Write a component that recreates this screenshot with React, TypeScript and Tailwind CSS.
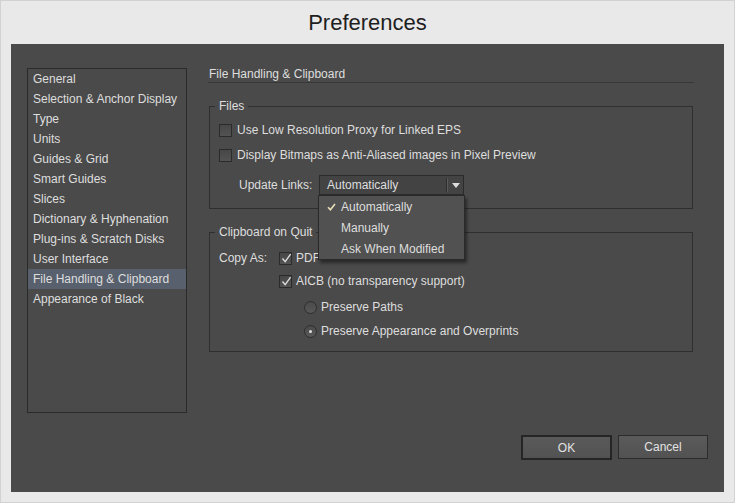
import React from "react"

const sidebarItems = [
  "General",
  "Selection & Anchor Display",
  "Type",
  "Units",
  "Guides & Grid",
  "Smart Guides",
  "Slices",
  "Dictionary & Hyphenation",
  "Plug-ins & Scratch Disks",
  "User Interface",
  "File Handling & Clipboard",
  "Appearance of Black",
]

function Checkbox({ checked }: { checked?: boolean }) {
  return (
    <span className="relative w-[13px] h-[13px] shrink-0 border border-[#2b2b2b] bg-gradient-to-b from-[#474747] to-[#535353] flex items-center justify-center">
      {checked && (
        <svg width="11" height="11" viewBox="0 0 11 11" className="absolute left-[1px] top-[0px]">
          <path d="M1.5 5.5 L4.2 8.6 L9.6 1.2" fill="none" stroke="#dcdcdc" strokeWidth="1.4" />
        </svg>
      )}
    </span>
  )
}

function Radio({ checked }: { checked?: boolean }) {
  return (
    <span className="w-[13px] h-[13px] shrink-0 rounded-full border border-[#2e2e2e] bg-gradient-to-b from-[#4a4a4a] to-[#585858] flex items-center justify-center">
      {checked && <span className="w-[3px] h-[3px] rounded-full bg-[#e2e2e2]" />}
    </span>
  )
}

export default function App() {
  return (
    <div className="w-[735px] h-[503px] bg-[#e9e9e9] border border-[#d2d2d2] flex flex-col font-['Liberation_Sans',Arial,sans-serif] text-[12px] text-[#dedede]">
      <div className="h-[43px] flex items-center justify-center text-[22px] text-[#1e1e1e] pb-[1px]">
        Preferences
      </div>

      <div className="ml-[10px] w-[713px] h-[448px] bg-[#4a4a4a] flex flex-col pt-[24px] px-[16px]">
        <div className="flex">
          {/* category list */}
          <div className="w-[160px] h-[345px] border border-[#2a2a2a] flex flex-col">
            {sidebarItems.map((item) => (
              <div
                key={item}
                className={`h-[20px] leading-[20px] pl-[5px] whitespace-nowrap ${
                  item === "File Handling & Clipboard" ? "bg-[#58606d]" : ""
                }`}
              >
                {item}
              </div>
            ))}
          </div>

          {/* settings */}
          <div className="ml-[21px] w-[486px] flex flex-col">
            <div className="h-[15px] leading-[13px] pl-[1px] border-b border-[#383838]">
              File Handling &amp; Clipboard
            </div>

            <fieldset className="mt-[15px] ml-[1px] w-[484px] border border-[#2f2f2f] pb-[13px]">
              <legend className="ml-[5px] px-[4px] leading-[16px]">Files</legend>
              <div className="pl-[9px] flex flex-col">
                <label className="mt-[6px] h-[20px] flex items-center gap-[5px]">
                  <Checkbox />
                  <span>Use Low Resolution Proxy for Linked EPS</span>
                </label>
                <label className="mt-[5px] h-[20px] flex items-center gap-[5px]">
                  <Checkbox />
                  <span>Display Bitmaps as Anti-Aliased images in Pixel Preview</span>
                </label>
                <div className="mt-[10px] h-[20px] flex items-center">
                  <span className="ml-[20px] w-[80px]">Update Links:</span>
                  <div className="relative">
                    <div className="w-[145px] h-[20px] border border-[#2b2b2b] bg-[#434343] flex items-center">
                      <span className="flex-1 pl-[7px] leading-[18px]">Automatically</span>
                      <span className="w-[1px] h-[14px] bg-[#2e2e2e]" />
                      <span className="w-[1px] h-[14px] bg-[#5a5a5a]" />
                      <span className="w-[15px] flex items-center justify-center">
                        <svg width="8" height="5" viewBox="0 0 8 5">
                          <path d="M0 0 H8 L4 5 Z" fill="#dcdcdc" />
                        </svg>
                      </span>
                    </div>

                    {/* open dropdown */}
                    <div className="absolute z-10 left-[-1px] top-[20px] w-[147px] border border-[#2a2a2a] bg-[#515151] shadow-[2px_3px_3px_rgba(0,0,0,0.45)] flex flex-col">
                      <div className="h-[21px] flex items-center">
                        <span className="w-[22px] flex justify-center pl-[2px]">
                          <svg width="9" height="8" viewBox="0 0 9 8">
                            <path d="M1 4.2 L3.4 6.8 L8 1" fill="none" stroke="#e8dfb8" strokeWidth="1.6" />
                          </svg>
                        </span>
                        <span>Automatically</span>
                      </div>
                      <div className="h-[21px] flex items-center pl-[22px]">Manually</div>
                      <div className="h-[21px] flex items-center pl-[22px]">Ask When Modified</div>
                    </div>
                  </div>
                </div>
              </div>
            </fieldset>

            <fieldset className="mt-[15px] ml-[1px] w-[484px] border border-[#2f2f2f] pb-[10px]">
              <legend className="ml-[5px] px-[4px] leading-[16px]">Clipboard on Quit</legend>
              <div className="pl-[9px] flex flex-col">
                <div className="mt-[8px] h-[20px] flex items-center">
                  <span className="w-[60px]">Copy As:</span>
                  <label className="flex items-center gap-[4px]">
                    <Checkbox checked />
                    <span>PDF</span>
                  </label>
                </div>
                <label className="mt-[3px] h-[20px] flex items-center gap-[4px] ml-[60px]">
                  <Checkbox checked />
                  <span>AICB (no transparency support)</span>
                </label>
                <label className="mt-[6px] h-[20px] flex items-center gap-[4px] ml-[85px]">
                  <Radio />
                  <span>Preserve Paths</span>
                </label>
                <label className="mt-[4px] h-[20px] flex items-center gap-[4px] ml-[85px]">
                  <Radio checked />
                  <span>Preserve Appearance and Overprints</span>
                </label>
              </div>
            </fieldset>
          </div>
        </div>

        <div className="mt-[22px] flex justify-end items-start gap-[6px]">
          <button className="w-[91px] h-[25px] border-2 border-[#252525] bg-gradient-to-b from-[#5a5a5a] to-[#525252] text-[#e2e2e2]">
            OK
          </button>
          <button className="w-[90px] h-[24px] border border-[#2c2c2c] bg-gradient-to-b from-[#5a5a5a] to-[#525252] text-[#e2e2e2]">
            Cancel
          </button>
        </div>
      </div>
    </div>
  )
}
